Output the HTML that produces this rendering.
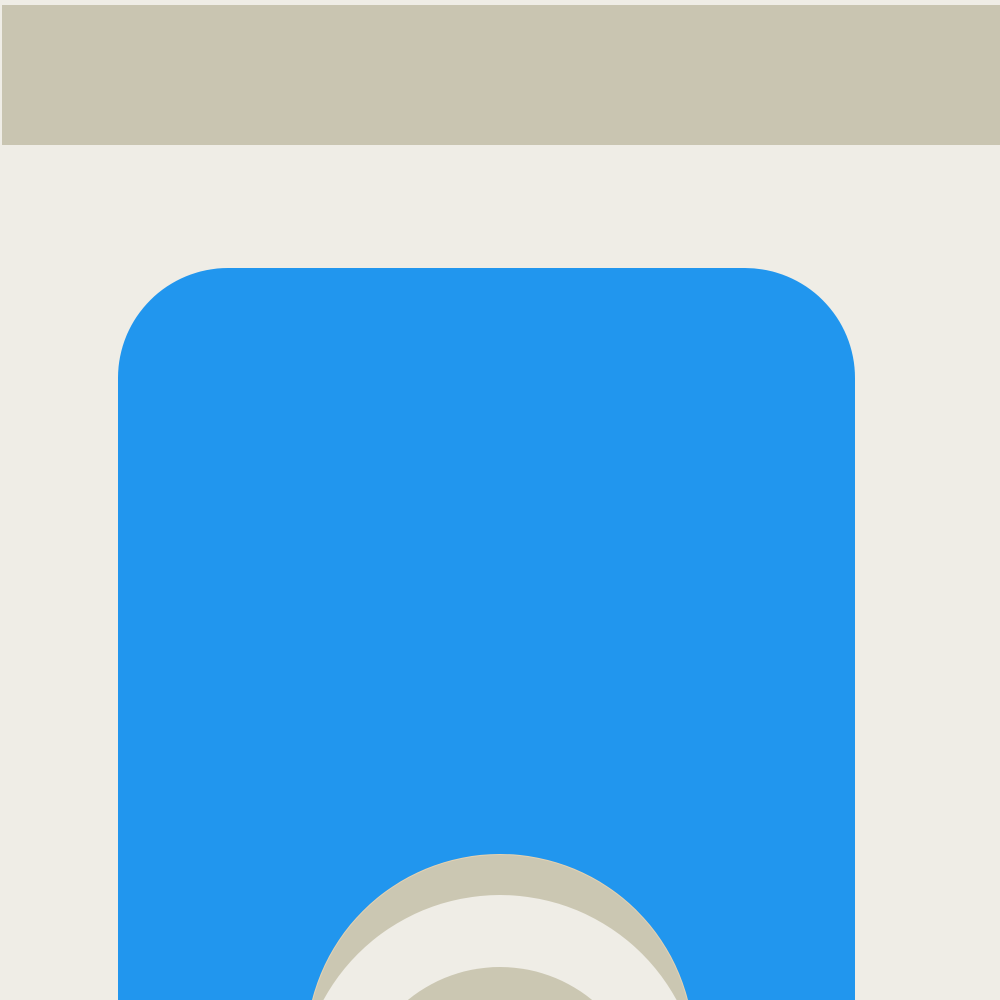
<!DOCTYPE html>
<html><head><style>
html,body{margin:0;padding:0;width:1000px;height:1000px;overflow:hidden;}
body{background:#efede6;position:relative;}
.top{position:absolute;left:2px;top:5px;width:998px;height:140px;background:#c9c5b1;}
.blue{position:absolute;left:118px;top:268px;width:737px;height:732px;background:#2196ee;border-radius:110px 110px 0 0;}
</style></head><body>
<div class="top"></div>
<div class="blue"></div>
<svg width="1000" height="1000" style="position:absolute;left:0;top:0">
<defs><clipPath id="c"><circle cx="500" cy="1048" r="193"/></clipPath></defs>
<circle cx="500" cy="1048" r="194" fill="#e6d2b0"/>
<circle cx="500" cy="1048" r="193" fill="#cbc7b2"/>
<g clip-path="url(#c)">
<circle cx="500" cy="1096" r="201" fill="#efede6"/>
<circle cx="500" cy="1112" r="145" fill="#cbc7b2"/>
</g>
</svg>
</body></html>
